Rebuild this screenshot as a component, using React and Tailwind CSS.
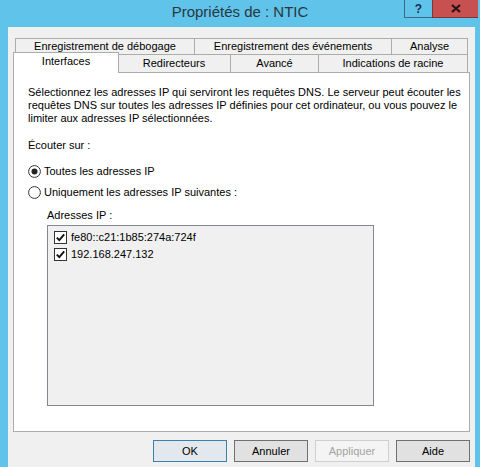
export default function App() {
  const Radio = ({ checked }) => (
    <svg width="13" height="13" viewBox="0 0 13 13" className="shrink-0">
      <circle cx="6.5" cy="6.5" r="5.9" fill="#ffffff" stroke="#333333" strokeWidth="1" />
      {checked && <circle cx="6.5" cy="6.5" r="3" fill="#222222" />}
    </svg>
  );
  const Check = () => (
    <svg width="13" height="13" viewBox="0 0 13 13" className="shrink-0">
      <rect x="0.5" y="0.5" width="12" height="12" fill="#ffffff" stroke="#333333" strokeWidth="1" />
      <path d="M2.8 6.6 L5.3 9.2 L10.2 3.4" fill="none" stroke="#111111" strokeWidth="1.9" />
    </svg>
  );
  const Tab = ({ w, children, last }) => (
    <div
      className={`h-full flex items-center justify-center border-t border-l border-[#acacac] bg-[#f0f0f0] ${last ? 'border-r' : ''}`}
      style={{ width: w }}
    >
      {children}
    </div>
  );
  return (
    <div className="w-[480px] h-[467px] bg-[#60c3e9] flex flex-col overflow-hidden font-['Liberation_Sans',Arial,sans-serif] text-[11px] text-black">
      <div className="relative h-[27px] shrink-0 flex items-center justify-center">
        <span className="text-[15px] text-[#2a3640] -mt-[2px]">Propriétés de : NTIC</span>
        <div className="absolute top-0 right-[2px] flex">
          <div className="w-[28px] h-[18px] border-l border-b border-[#3b6b84] flex items-center justify-center font-bold text-[12px] text-[#1c2d55]">?</div>
          <div className="w-[46px] h-[18px] bg-[#c75050] border-b border-l border-[#7d3636] flex items-center justify-center">
            <svg width="10" height="9" viewBox="0 0 10 9">
              <path d="M1 1 L9 8 M9 1 L1 8" stroke="#2a1414" strokeWidth="2.2" />
            </svg>
          </div>
        </div>
      </div>
      <div className="flex-1 ml-[8px] mr-[5px] bg-[#f0f0f0] px-[5px] pt-[11px] flex flex-col">
        <div className="flex ml-[2px] w-[453px] h-[16px]">
          <Tab w={179}>Enregistrement de débogage</Tab>
          <Tab w={197}>Enregistrement des événements</Tab>
          <Tab w={77} last>Analyse</Tab>
        </div>
        <div className="flex ml-[2px] w-[453px] h-[18px] items-end relative z-10">
          <div className="-ml-[2px] -mr-[2px] w-[106px] h-[21px] -mb-[1px] bg-white border-t border-l border-r border-[#acacac] flex items-center justify-center pb-[3px] relative z-10">
            Interfaces
          </div>
          <Tab w={113}>Redirecteurs</Tab>
          <Tab w={88}>Avancé</Tab>
          <Tab w={150} last>Indications de racine</Tab>
        </div>
        <div className="w-[457px] h-[360px] border border-[#adadad] bg-white pl-[14px] pt-[13px] flex flex-col">
          <p className="leading-[13px] whitespace-nowrap">
            Sélectionnez les adresses IP qui serviront les requêtes DNS. Le serveur peut écouter les
            <br />
            requêtes DNS sur toutes les adresses IP définies pour cet ordinateur, ou vous pouvez le
            <br />
            limiter aux adresses IP sélectionnées.
          </p>
          <p className="leading-[13px] mt-[14px]">Écouter sur :</p>
          <div className="flex items-center gap-[3px] h-[16px] mt-[11px]">
            <Radio checked />
            <span>Toutes les adresses IP</span>
          </div>
          <div className="flex items-center gap-[3px] h-[16px] mt-[5px]">
            <Radio />
            <span>Uniquement les adresses IP suivantes :</span>
          </div>
          <p className="leading-[13px] mt-[9px] ml-[19px]">Adresses IP :</p>
          <div className="ml-[19px] mt-[3px] w-[327px] h-[181px] border border-[#828790] bg-[#f0f0f0] pl-[6px] pt-[5px] flex flex-col gap-[4px]">
            <div className="flex items-center gap-[4px] h-[13px]">
              <Check />
              <span>fe80::c21:1b85:274a:724f</span>
            </div>
            <div className="flex items-center gap-[4px] h-[13px]">
              <Check />
              <span>192.168.247.132</span>
            </div>
          </div>
        </div>
        <div className="flex justify-end gap-[7px] mt-[8px]">
          <div className="w-[74px] h-[22px] border border-[#3c7fb1] bg-[#e3e8ee] flex items-center justify-center">OK</div>
          <div className="w-[74px] h-[22px] border border-[#707070] bg-[#e1e1e1] flex items-center justify-center">Annuler</div>
          <div className="w-[74px] h-[22px] border border-[#cfcfcf] bg-[#f4f4f4] text-[#a3a3a3] flex items-center justify-center">Appliquer</div>
          <div className="w-[74px] h-[22px] border border-[#707070] bg-[#e1e1e1] flex items-center justify-center">Aide</div>
        </div>
      </div>
    </div>
  );
}
